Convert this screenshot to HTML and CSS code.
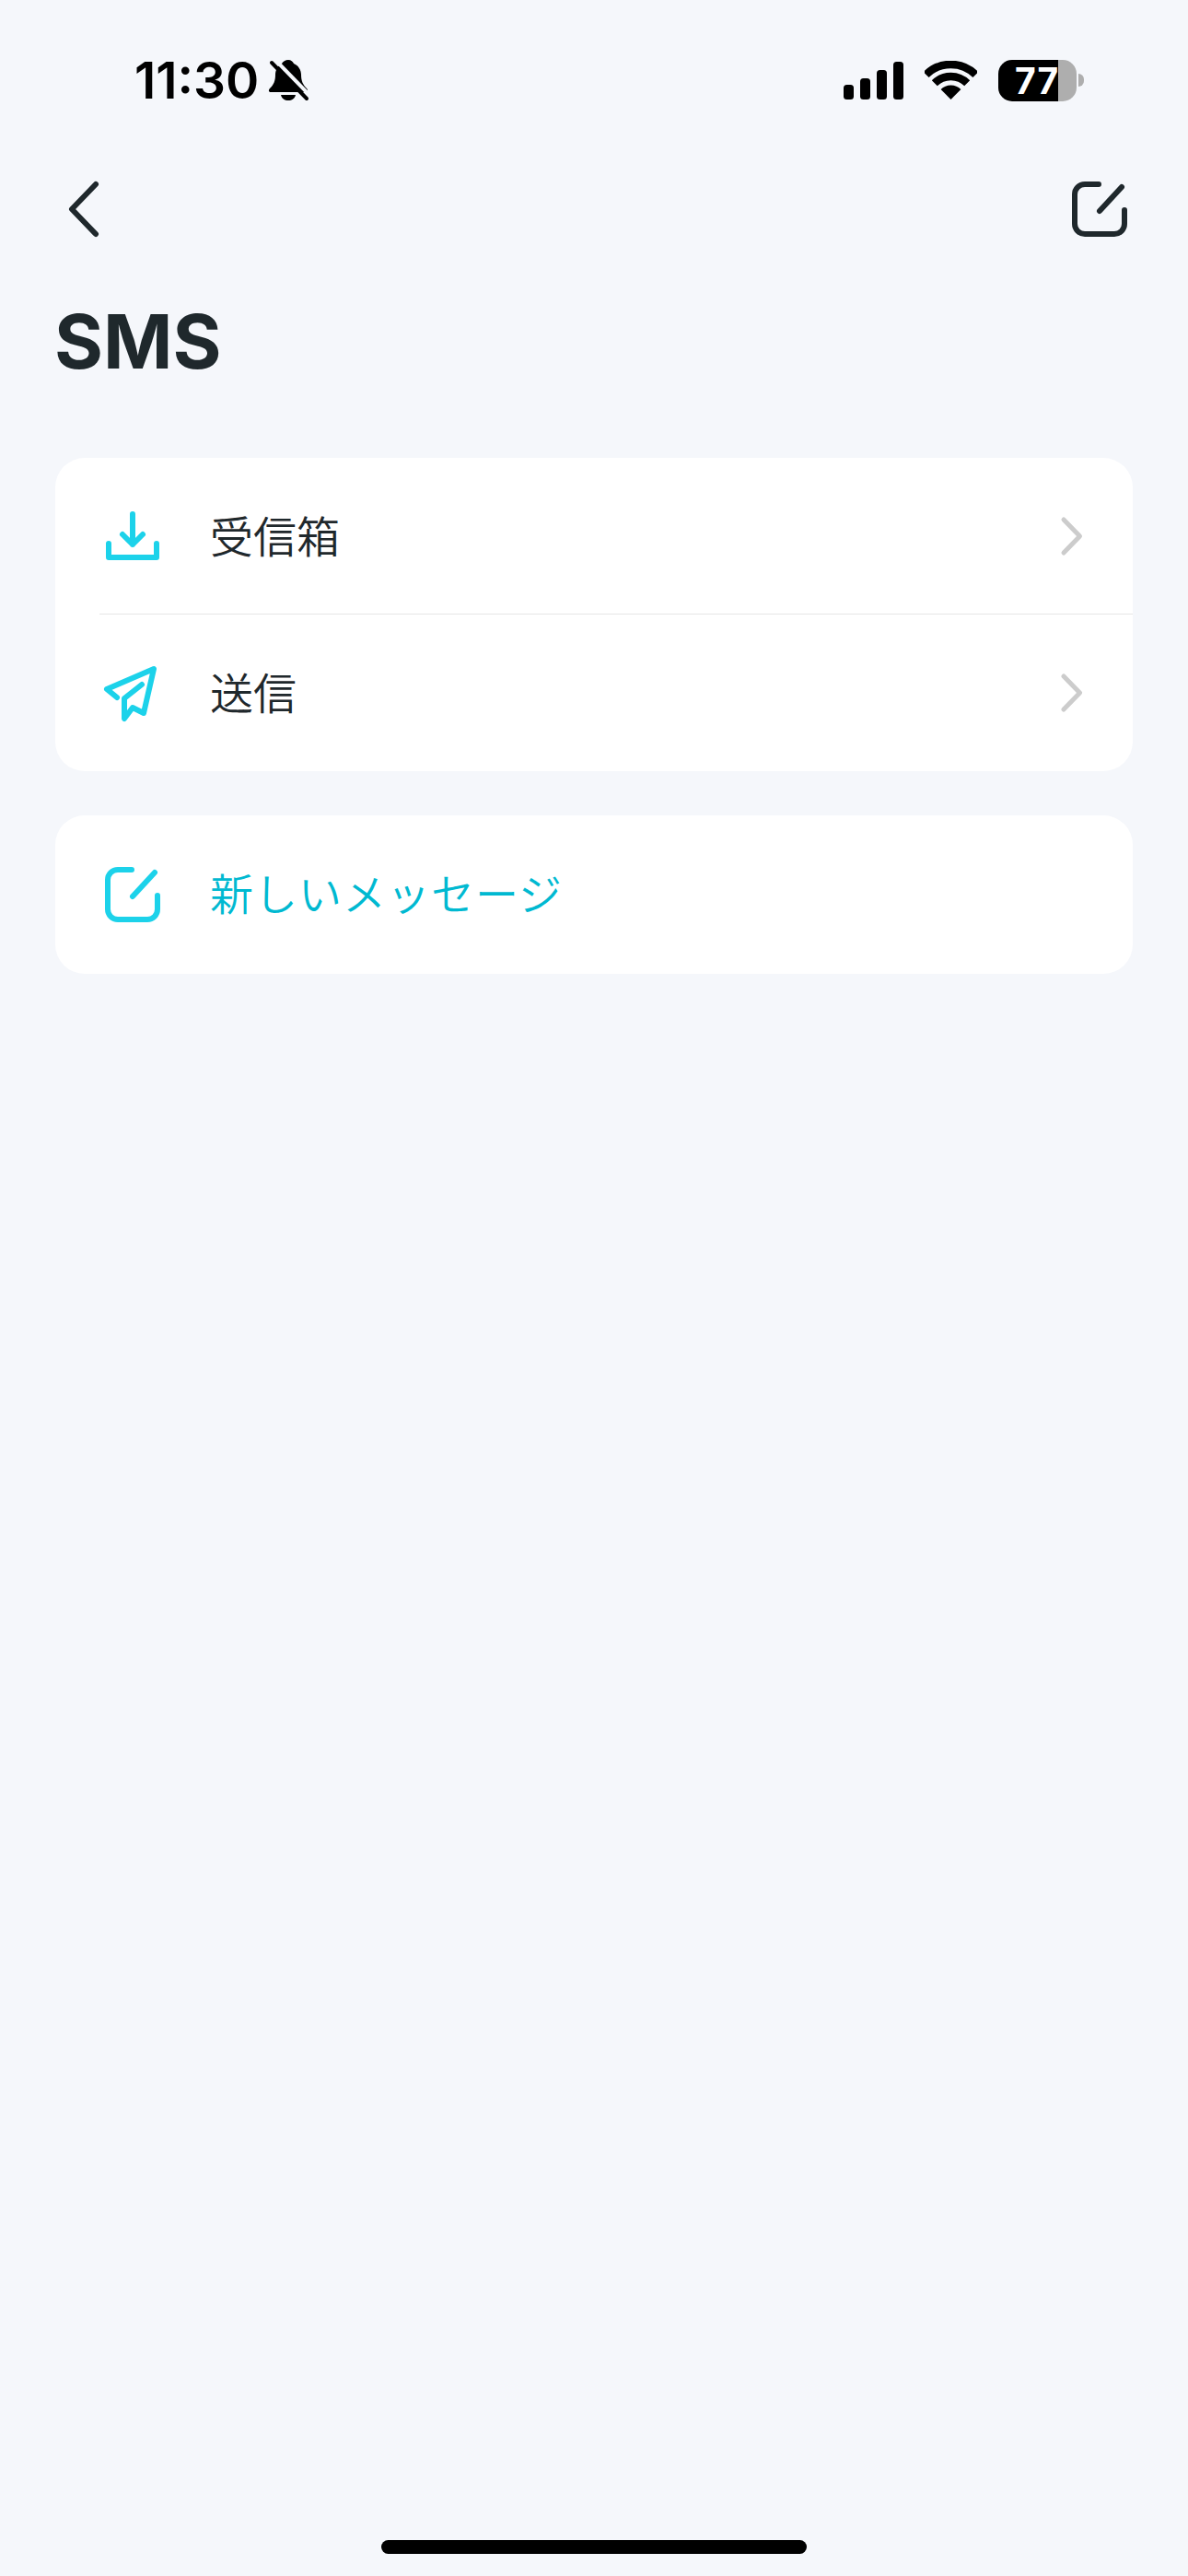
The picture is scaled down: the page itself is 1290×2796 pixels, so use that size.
FILE: index.html
```html
<!DOCTYPE html>
<html lang="ja">
<head>
    <meta charset="utf-8">
    <title>SMS</title>
    <meta name="viewport" content="width=device-width, initial-scale=1">
    <link rel="stylesheet" href="styles.css">
</head>
<body>
    <div class="statusbar">
        <div class="status-left">
            <span class="time">11:30</span>
            <svg class="bell" width="46" height="46" viewBox="0 0 46 46">
                <path d="M23 1c3 0 5 2 6 4 5 2 8 7 8 12 0 7 2 11 6 15 2 2 1 4-1 4H4c-2 0-3-2-1-4 4-4 6-8 6-15 0-5 3-10 7-12 1-2 4-4 7-4z" fill="#000"/>
                <path d="M15 39h16c-1 4-4 6-8 6s-7-2-8-6z" fill="#000"/>
                <path d="M8 0l38 39" stroke="#f5f7fb" stroke-width="4" fill="none"/>
                <path d="M5 4l38 39" stroke="#000" stroke-width="4" stroke-linecap="round" fill="none"/>
            </svg>
        </div>
        <div class="status-right">
            <svg width="65" height="41" viewBox="0 0 65 41">
                <rect x="0" y="25" width="11" height="16" rx="3.5"/>
                <rect x="18" y="18" width="11" height="23" rx="3.5"/>
                <rect x="36" y="9" width="11" height="32" rx="3.5"/>
                <rect x="54" y="0" width="11" height="41" rx="3.5"/>
            </svg>
            <svg class="wifi" width="57" height="42" viewBox="0 0 57 42">
                <path d="M1.6 15.1a38 38 0 0 1 53.8 0" stroke="#000" stroke-width="8.5" fill="none"/>
                <path d="M10.8 24.3a25 25 0 0 1 35.4 0" stroke="#000" stroke-width="8.5" fill="none"/>
                <path d="M28.5 42L17.6 31.1a15.4 15.4 0 0 1 21.8 0z" fill="#000"/>
            </svg>
            <div class="battery">
                <div class="battery-body">77</div>
                <div class="battery-nub"></div>
            </div>
        </div>
    </div>

    <div class="nav">
        <svg width="72" height="72" viewBox="0 0 72 72">
            <path d="M44 9L18 36l26 27" class="line-dark"/>
        </svg>
        <svg width="72" height="72" viewBox="0 0 72 72">
            <path d="M35 9H20A11 11 0 0 0 9 20v32a11 11 0 0 0 11 11h32a11 11 0 0 0 11-11V37" class="line-dark"/>
            <path d="M60 12L36 38" class="line-dark"/>
        </svg>
    </div>

    <h1 class="title">SMS</h1>

    <div class="card">
        <div class="row">
            <svg class="row-icon" width="72" height="72" viewBox="0 0 72 72">
                <path d="M10 44v15h52V44" class="line-cyan"/>
                <path d="M36 12v33M25 34l11 11 11-11" class="line-cyan"/>
            </svg>
            <span class="row-text">受信箱</span>
            <svg class="row-arrow" width="30" height="46" viewBox="0 0 30 46">
                <path d="M5 5l17.5 18L5 41" class="line-grey"/>
            </svg>
        </div>
        <div class="divider"></div>
        <div class="row">
            <svg class="row-icon" width="72" height="72" viewBox="0 0 72 72">
                <path d="M19 41L8 32l51-22-11 48-12-6-9 12V42l19-15" class="line-cyan"/>
            </svg>
            <span class="row-text">送信</span>
            <svg class="row-arrow" width="30" height="46" viewBox="0 0 30 46">
                <path d="M5 5l17.5 18L5 41" class="line-grey"/>
            </svg>
        </div>
    </div>

    <div class="card card-action">
        <div class="row">
            <svg class="row-icon" width="72" height="72" viewBox="0 0 72 72">
                <path d="M35 9H20A11 11 0 0 0 9 20v32a11 11 0 0 0 11 11h32a11 11 0 0 0 11-11V37" class="line-cyan"/>
                <path d="M60 12L36 38" class="line-cyan"/>
            </svg>
            <span class="row-text row-text-cyan">新しいメッセージ</span>
        </div>
    </div>

    <div class="home-bar"></div>
</body>
</html>
```

FILE: styles.css
```css
html, body {
    height: 100%;
    margin: 0;
}

body {
    display: flex;
    flex-direction: column;
    min-height: 2796px;
    background-color: #f5f7fb;
    color: #1f282c;
    font-family: "Inter", "Noto Sans CJK JP", sans-serif;
}

.statusbar {
    display: flex;
    justify-content: space-between;
    align-items: center;
    height: 174px;
    padding: 0 113px 0 146px;
}

.status-left,
.status-right {
    display: flex;
    align-items: center;
}

.time {
    color: #000;
    font-size: 55px;
    font-weight: 600;
}

.bell {
    margin-left: 9px;
}

.wifi {
    margin-left: 23px;
}

.battery {
    display: flex;
    align-items: center;
    margin-left: 23px;
}

.battery-body {
    width: 85px;
    height: 45px;
    box-sizing: border-box;
    padding-left: 18px;
    border-radius: 15px;
    background: linear-gradient(to right, #000 76%, #aeaeae 76%);
    color: #fff;
    font-size: 39px;
    font-weight: 700;
    letter-spacing: 1px;
    line-height: 45px;
}

.battery-nub {
    width: 6px;
    height: 14px;
    margin-left: 2px;
    border-radius: 0 6px 6px 0;
    background-color: #aeaeae;
}

.nav {
    display: flex;
    justify-content: space-between;
    margin-top: 17px;
    padding: 0 60px;
}

.title {
    margin: 58px 59px 76px;
    font-size: 81px;
    font-weight: 700;
    line-height: 100px;
}

.card {
    margin: 0 60px;
    border-radius: 32px;
    background-color: #fff;
}

.card-action {
    margin-top: 48px;
}

.row {
    display: flex;
    align-items: center;
    height: 170px;
    padding-left: 48px;
    padding-right: 50px;
}

.card-action .row {
    height: 172px;
}

.row-icon {
    flex-shrink: 0;
}

.row-text {
    margin-left: 48px;
    margin-bottom: 5px;
    font-size: 47px;
    font-weight: 350;
}

.row-text-cyan {
    margin-bottom: 7px;
    color: #00b9d1;
    letter-spacing: 1px;
}

.row-arrow {
    margin-left: auto;
}

.divider {
    height: 1px;
    margin-top: -1px;
    margin-left: 48px;
    background-color: #e6e6e6;
}

.line-dark,
.line-cyan,
.line-grey {
    fill: none;
    stroke-linecap: round;
    stroke-linejoin: round;
}

.line-dark {
    stroke: #1f282c;
    stroke-width: 6;
}

.line-cyan {
    stroke: #1cd2ea;
    stroke-width: 6;
}

.line-grey {
    stroke: #cccccc;
    stroke-width: 5;
}

.home-bar {
    align-self: center;
    width: 462px;
    height: 15px;
    margin-top: auto;
    margin-bottom: 24px;
    border-radius: 8px;
    background-color: #000;
}
```
